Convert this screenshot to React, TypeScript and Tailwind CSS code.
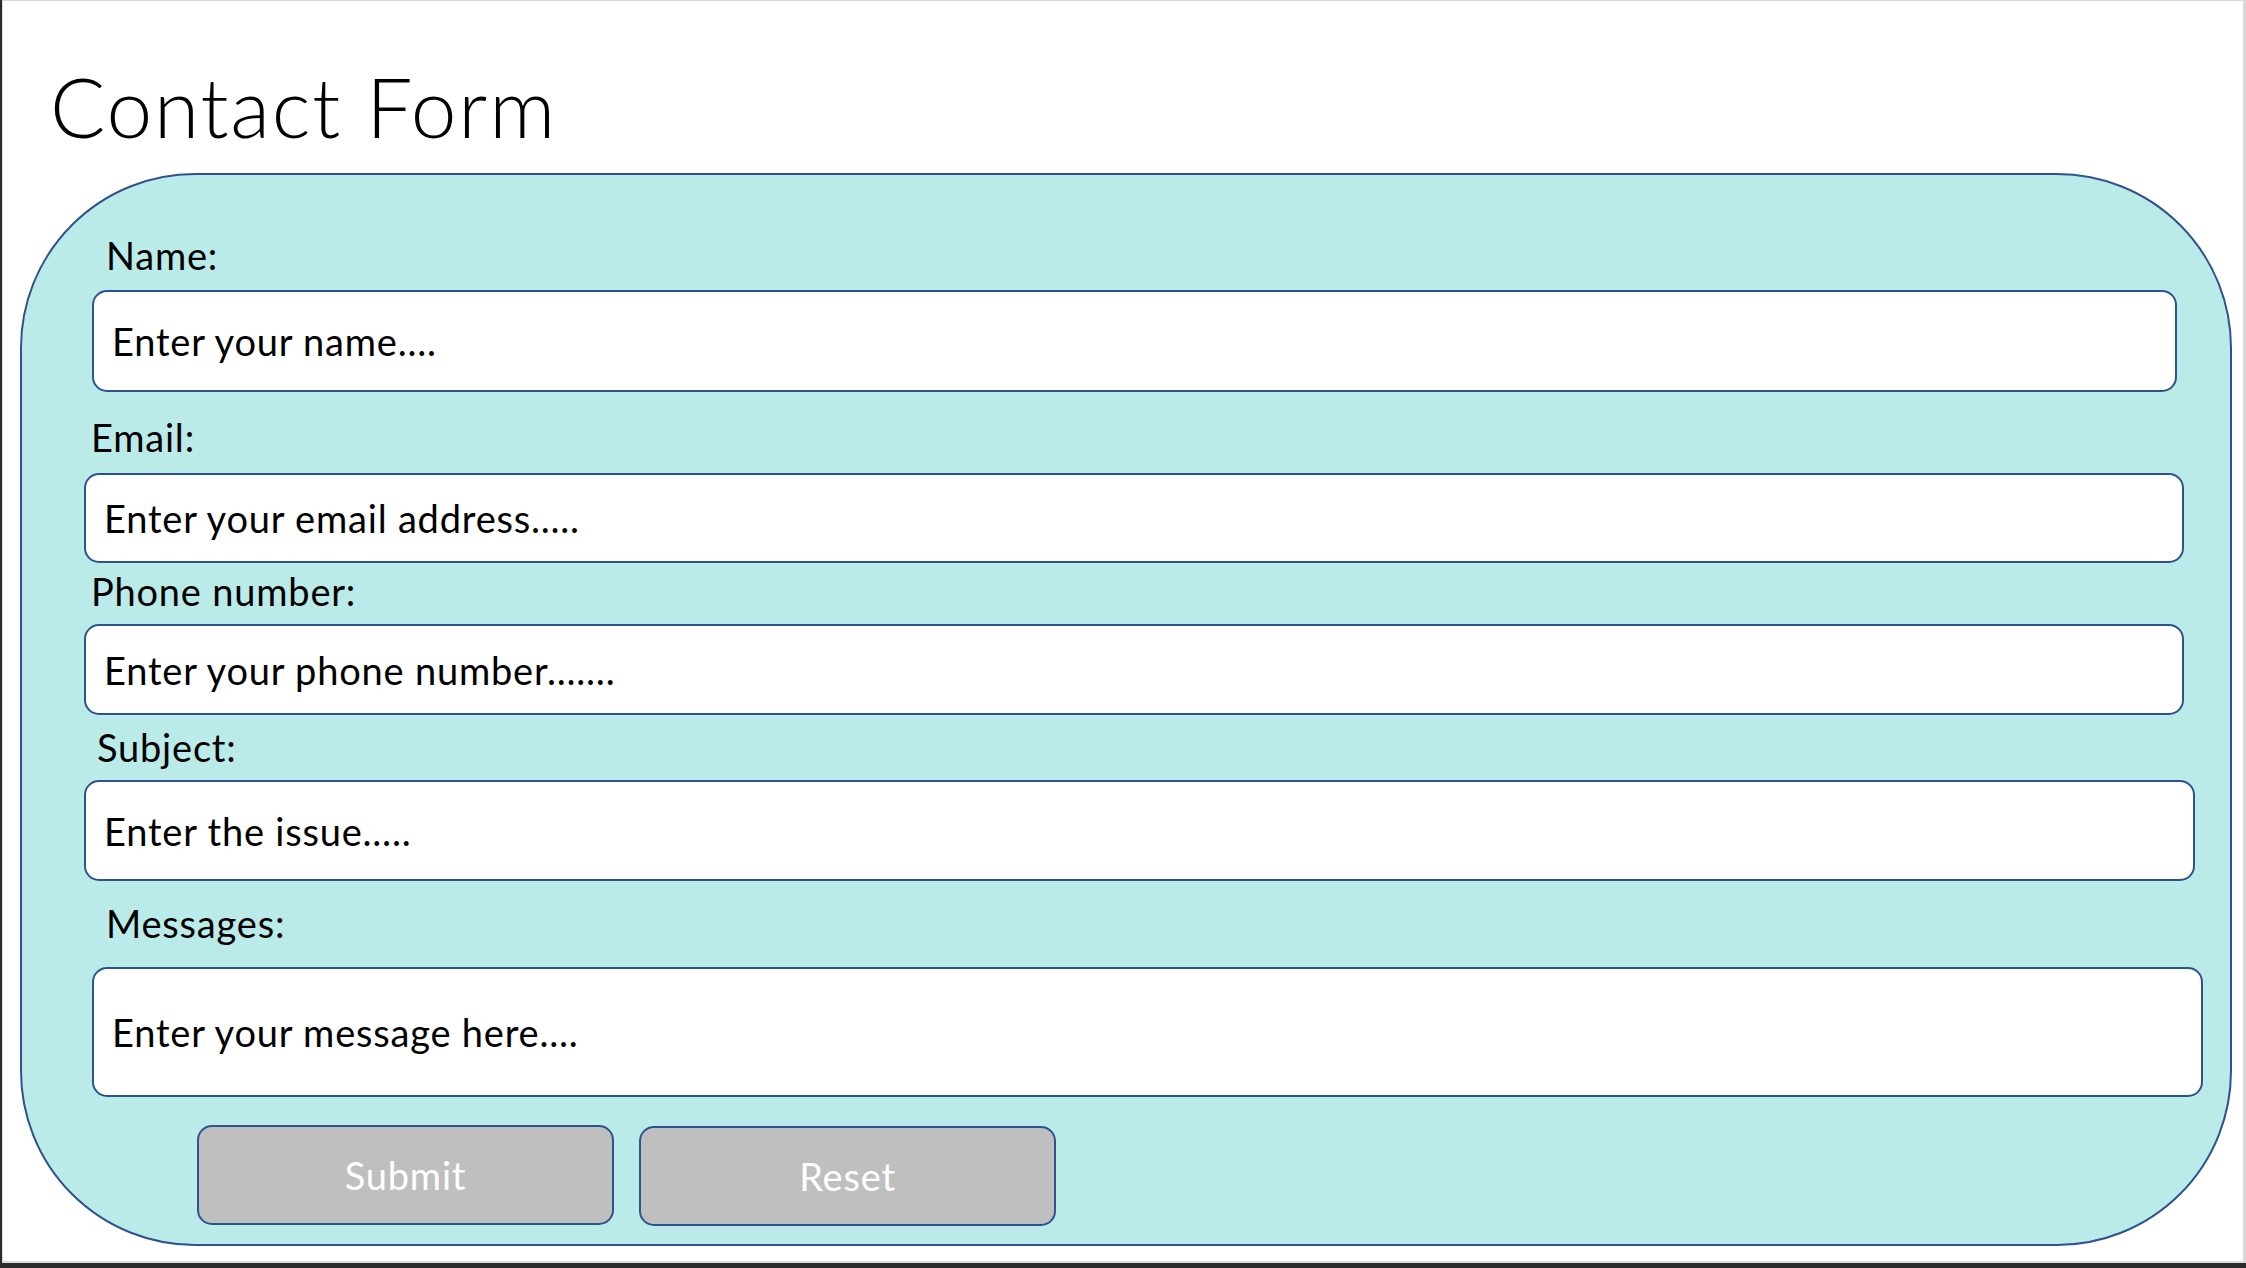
import React from "react";

const Label = ({ text, className }: { text: string; className: string }) => (
  <div className={`h-[38px] text-[38px] leading-none tracking-[0.8px] text-black ${className}`}>{text}</div>
);

const Field = ({ text, className }: { text: string; className: string }) => (
  <div
    className={`flex items-center rounded-[15px] border-2 border-[#2f528f] bg-white pl-[18px] text-[38px] leading-none tracking-[0.8px] text-black ${className}`}
  >
    <span className="h-[38px]">{text}</span>
  </div>
);

export default function App() {
  return (
    <div className="h-[1268px] w-full bg-[#2b2b2b] pl-[2px] pb-[5px] font-['Lato',sans-serif]">
      <div className="flex h-full flex-col border-t border-l border-r-[3px] border-b-2 border-[#d9d9d9] bg-white">
        <h1 className="mt-[64px] ml-[47px] h-[82px] text-[82px] font-light leading-none tracking-[1.8px] text-black">
          Contact Form
        </h1>
        <div className="mt-[26px] ml-[17px] mr-[11px] flex h-[1073px] flex-col rounded-[175px] border-2 border-[#2f528f] bg-[#bbebe8]">
          <Label text="Name:" className="mt-[61px] ml-[84px]" />
          <Field text="Enter your name…." className="mt-[16px] ml-[70px] h-[102px] w-[2085px]" />
          <Label text="Email:" className="mt-[26px] ml-[69px]" />
          <Field text="Enter your email address….." className="mt-[17px] ml-[62px] h-[90px] w-[2100px]" />
          <Label text="Phone number:" className="mt-[9px] ml-[69px]" />
          <Field text="Enter your phone number……." className="mt-[14px] ml-[62px] h-[91px] w-[2100px]" />
          <Label text="Subject:" className="mt-[13px] ml-[75px]" />
          <Field text="Enter the issue….." className="mt-[14px] ml-[62px] h-[101px] w-[2111px] pl-[17px]" />
          <Label text="Messages:" className="mt-[23px] ml-[84px]" />
          <Field text="Enter your message here…." className="mt-[25px] ml-[70px] h-[130px] w-[2111px]" />
          <div className="mt-[28px] ml-[175px] flex items-start gap-[25px]">
            <button className="flex h-[100px] w-[417px] items-center justify-center rounded-[15px] border-2 border-[#2f528f] bg-[#bfbfbf] text-[38px] leading-none tracking-[0.8px] text-white">
              Submit
            </button>
            <button className="mt-[1px] flex h-[100px] w-[417px] items-center justify-center rounded-[15px] border-2 border-[#2f528f] bg-[#bfbfbf] text-[38px] leading-none tracking-[0.8px] text-white">
              Reset
            </button>
          </div>
        </div>
      </div>
    </div>
  );
}
